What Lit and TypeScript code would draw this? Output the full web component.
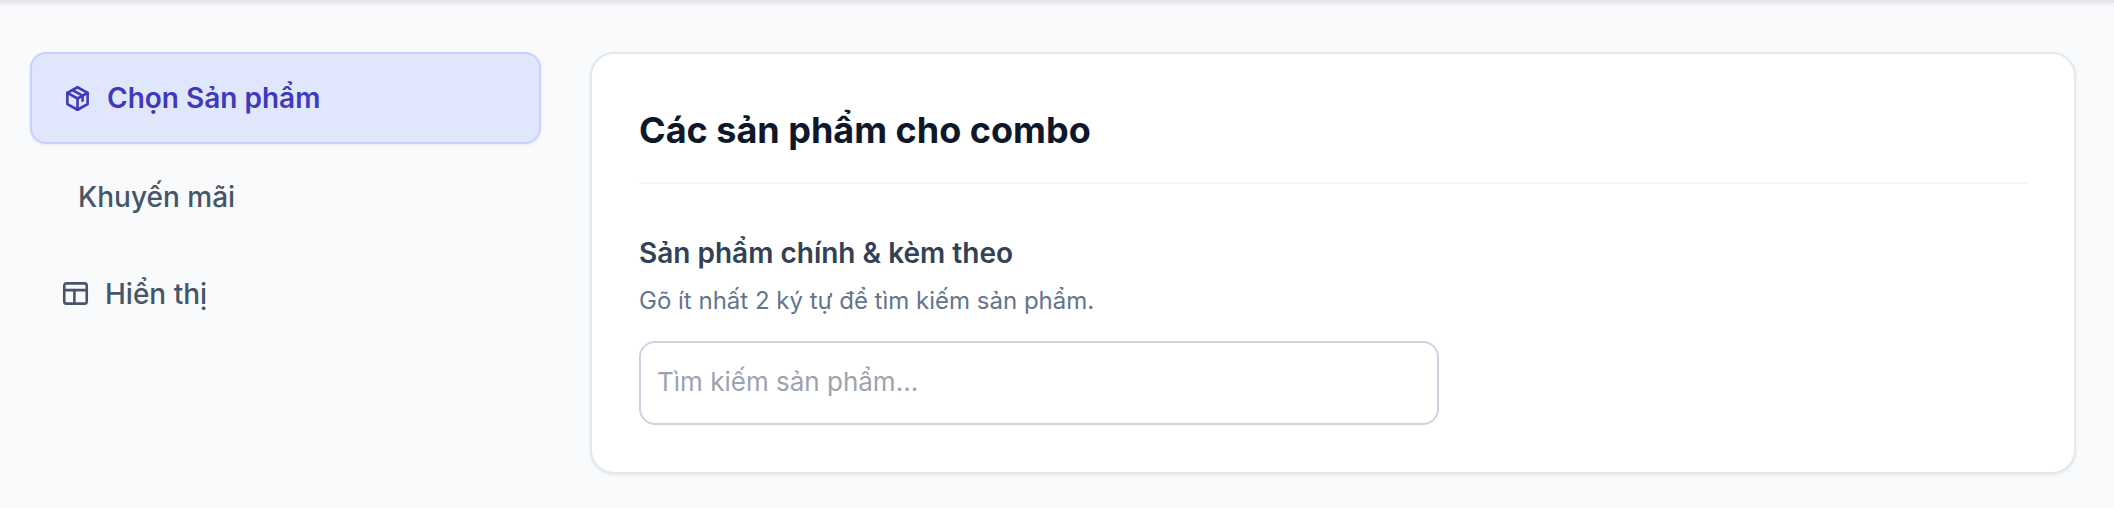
import { LitElement, html, css } from "lit";
import { customElement } from "lit/decorators.js";

@customElement("app-root")
export class AppRoot extends LitElement {
  static styles = css`
    :host { display: block; height: 508px; background: #f9fafb; font-family: Inter, "Noto Sans", sans-serif; overflow: hidden; box-sizing: border-box; }
    * { box-sizing: border-box; }
    .topbar { height: 3px; background: #e5e7eb; box-shadow: 0 1px 4px rgba(0,0,0,.1); }
    .page { display: flex; gap: 49px; padding: 49px 38px 0 30px; align-items: flex-start; }
    .side { width: 511px; flex: none; display: flex; flex-direction: column; gap: 6px; }
    .item { height: 91px; display: flex; align-items: center; border: 2px solid transparent; border-radius: 16px; font-size: 28px; font-weight: 500; color: #475569; padding-left: 30px; gap: 16px; }
    .item svg { width: 27px; height: 27px; flex: none; fill: none; stroke: currentColor; stroke-width: 2.3; stroke-linecap: round; stroke-linejoin: round; }
    .item.active { background: #e0e7fc; border-color: #c7d2fc; color: #3f39bd; font-weight: 600; box-shadow: 0 1px 3px rgba(0,0,0,.08); padding-left: 32px; height: 92px; margin-bottom: 1px; }
    .item.plain { padding-left: 46px; }
    .card { flex: 1; height: 422px; background: #fff; border: 2px solid #e2e8f0; border-radius: 24px; padding: 50px 47px 0; box-shadow: 0 1px 3px rgba(0,0,0,.08); }
    h2 { margin: 0; font-size: 36px; line-height: 52px; font-weight: 700; color: #0f172a; padding-bottom: 26px; border-bottom: 2px solid #f1f5f9; }
    .label { margin: 51px 0 0; font-size: 28px; line-height: 36px; font-weight: 600; color: #334155; }
    .desc { margin: 14px 0 0; font-size: 24px; line-height: 32px; color: #64748b; }
    .search { display: flex; align-items: center; width: 800px; height: 84px; margin-top: 24px; padding: 0 16px 3px; border: 2px solid #cbd5e1; border-radius: 16px; font-size: 26px; color: #9ca3af; background: #fff; }
  `;

  render() {
    return html`
      <div class="topbar"></div>
      <div class="page">
        <nav class="side">
          <div class="item active">
            <svg viewBox="0 0 24 24"><path d="M12 2 21 7V17L12 22 3 17V7Z"/><path d="M3 7 12 12 21 7"/><path d="M12 12V22"/><path d="M7.5 4.5 16.5 9.5V14"/></svg>
            <span>Chọn Sản phẩm</span>
          </div>
          <div class="item plain"><span>Khuyến mãi</span></div>
          <div class="item">
            <svg viewBox="0 0 24 24"><rect x="2" y="3" width="20" height="18" rx="2"/><path d="M2 9H22"/><path d="M11 9V21"/></svg>
            <span>Hiển thị</span>
          </div>
        </nav>
        <section class="card">
          <h2>Các sản phẩm cho combo</h2>
          <h3 class="label">Sản phẩm chính &amp; kèm theo</h3>
          <p class="desc">Gõ ít nhất 2 ký tự để tìm kiếm sản phẩm.</p>
          <div class="search">Tìm kiếm sản phẩm...</div>
        </section>
      </div>
    `;
  }
}
